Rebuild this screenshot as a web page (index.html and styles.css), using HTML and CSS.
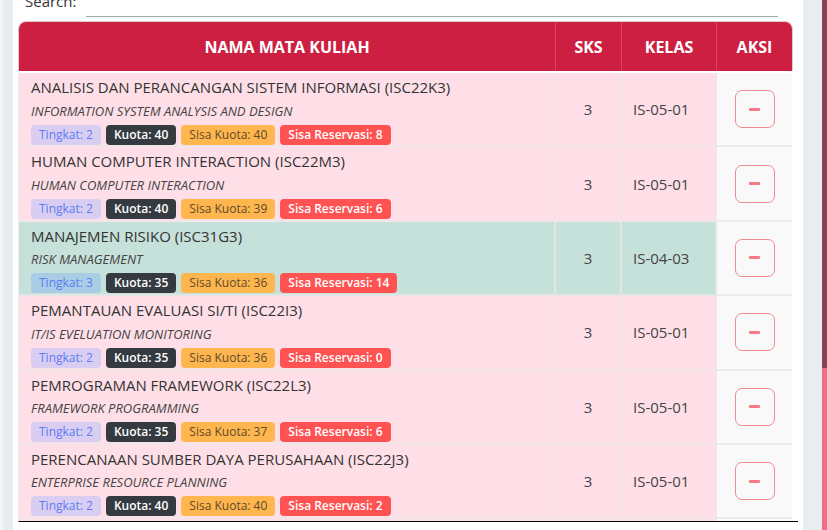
FILE: index.html
```html
<!DOCTYPE html>
<html>
<head>
<meta charset="utf-8">
<link rel="stylesheet" href="styles.css">
</head>
<body>
<div class="page">
  <div class="card">
    <div class="search">
      <label class="search-label">Search:</label>
      <span class="search-input"></span>
    </div>
    <div class="table">
      <div class="thead">
        <div class="th">NAMA MATA KULIAH</div>
        <div class="th">SKS</div>
        <div class="th">KELAS</div>
        <div class="th last">AKSI</div>
      </div>
      <div class="tbody">
        <div class="tr">
          <div class="td name">
            <div class="title">ANALISIS DAN PERANCANGAN SISTEM INFORMASI (ISC22K3)</div>
            <div class="subtitle">INFORMATION SYSTEM ANALYSIS AND DESIGN</div>
            <div class="badges"><span class="badge b-tingkat">Tingkat: 2</span><span class="badge b-kuota">Kuota: 40</span><span class="badge b-sisa">Sisa Kuota: 40</span><span class="badge b-res">Sisa Reservasi: 8</span></div>
          </div>
          <div class="td sks">3</div>
          <div class="td kelas">IS-05-01</div>
          <div class="td aksi"><span class="btn-remove"><span class="minus"></span></span></div>
        </div>
        <div class="tr">
          <div class="td name">
            <div class="title">HUMAN COMPUTER INTERACTION (ISC22M3)</div>
            <div class="subtitle">HUMAN COMPUTER INTERACTION</div>
            <div class="badges"><span class="badge b-tingkat">Tingkat: 2</span><span class="badge b-kuota">Kuota: 40</span><span class="badge b-sisa">Sisa Kuota: 39</span><span class="badge b-res">Sisa Reservasi: 6</span></div>
          </div>
          <div class="td sks">3</div>
          <div class="td kelas">IS-05-01</div>
          <div class="td aksi"><span class="btn-remove"><span class="minus"></span></span></div>
        </div>
        <div class="tr green">
          <div class="td name">
            <div class="title">MANAJEMEN RISIKO (ISC31G3)</div>
            <div class="subtitle">RISK MANAGEMENT</div>
            <div class="badges"><span class="badge b-tingkat">Tingkat: 3</span><span class="badge b-kuota">Kuota: 35</span><span class="badge b-sisa">Sisa Kuota: 36</span><span class="badge b-res">Sisa Reservasi: 14</span></div>
          </div>
          <div class="td sks">3</div>
          <div class="td kelas">IS-04-03</div>
          <div class="td aksi"><span class="btn-remove"><span class="minus"></span></span></div>
        </div>
        <div class="tr">
          <div class="td name">
            <div class="title">PEMANTAUAN EVALUASI SI/TI (ISC22I3)</div>
            <div class="subtitle">IT/IS EVELUATION MONITORING</div>
            <div class="badges"><span class="badge b-tingkat">Tingkat: 2</span><span class="badge b-kuota">Kuota: 35</span><span class="badge b-sisa">Sisa Kuota: 36</span><span class="badge b-res">Sisa Reservasi: 0</span></div>
          </div>
          <div class="td sks">3</div>
          <div class="td kelas">IS-05-01</div>
          <div class="td aksi"><span class="btn-remove"><span class="minus"></span></span></div>
        </div>
        <div class="tr">
          <div class="td name">
            <div class="title">PEMROGRAMAN FRAMEWORK (ISC22L3)</div>
            <div class="subtitle">FRAMEWORK PROGRAMMING</div>
            <div class="badges"><span class="badge b-tingkat">Tingkat: 2</span><span class="badge b-kuota">Kuota: 35</span><span class="badge b-sisa">Sisa Kuota: 37</span><span class="badge b-res">Sisa Reservasi: 6</span></div>
          </div>
          <div class="td sks">3</div>
          <div class="td kelas">IS-05-01</div>
          <div class="td aksi"><span class="btn-remove"><span class="minus"></span></span></div>
        </div>
        <div class="tr">
          <div class="td name">
            <div class="title">PERENCANAAN SUMBER DAYA PERUSAHAAN (ISC22J3)</div>
            <div class="subtitle">ENTERPRISE RESOURCE PLANNING</div>
            <div class="badges"><span class="badge b-tingkat">Tingkat: 2</span><span class="badge b-kuota">Kuota: 40</span><span class="badge b-sisa">Sisa Kuota: 40</span><span class="badge b-res">Sisa Reservasi: 2</span></div>
          </div>
          <div class="td sks">3</div>
          <div class="td kelas">IS-05-01</div>
          <div class="td aksi"><span class="btn-remove"><span class="minus"></span></span></div>
        </div>
        <div class="tr">
          <div class="td name">
            <div class="title">SISTEM ENTERPRISE (ISC32A3)</div>
            <div class="subtitle">ENTERPRISE SYSTEM</div>
            <div class="badges"><span class="badge b-tingkat">Tingkat: 3</span><span class="badge b-kuota">Kuota: 40</span><span class="badge b-sisa">Sisa Kuota: 38</span><span class="badge b-res">Sisa Reservasi: 4</span></div>
          </div>
          <div class="td sks">3</div>
          <div class="td kelas">IS-05-01</div>
          <div class="td aksi"><span class="btn-remove"><span class="minus"></span></span></div>
        </div>
        <div class="tr">
          <div class="td name">
            <div class="title">TATA KELOLA TEKNOLOGI INFORMASI (ISC32B3)</div>
            <div class="subtitle">IT GOVERNANCE</div>
            <div class="badges"><span class="badge b-tingkat">Tingkat: 3</span><span class="badge b-kuota">Kuota: 40</span><span class="badge b-sisa">Sisa Kuota: 40</span><span class="badge b-res">Sisa Reservasi: 5</span></div>
          </div>
          <div class="td sks">3</div>
          <div class="td kelas">IS-05-01</div>
          <div class="td aksi"><span class="btn-remove"><span class="minus"></span></span></div>
        </div>
      </div>
    </div>
  </div>
  <div class="side"></div>
  <div class="pagebar"></div>
</div>
</body>
</html>
```
FILE: styles.css
```css
* { box-sizing: border-box; }
html, body { margin: 0; padding: 0; }
body {
  font-family: "Open Sans", "Liberation Sans", sans-serif;
  background: #e9ecf0;
  overflow: hidden;
  color: #333;
}
.page {
  display: flex;
  height: 530px;
  border-left: 3px solid #f4f5f7;
  padding-left: 10px;
  overflow: hidden;
}
.card {
  width: 790px;
  flex: none;
  background: #fff;
  padding: 0 5px;
}
.side { width: 19px; flex: none; background: #e9ecf1; }
.pagebar {
  width: 5px;
  flex: none;
  background: linear-gradient(#8b4253 0, #8b4253 368px, #ee7088 368px, #ee7088 100%);
}

.search {
  display: flex;
  align-items: stretch;
  height: 31px;
  margin-top: -14px;
  margin-bottom: 4px;
  padding-left: 7px;
}
.search-label {
  font-size: 15px;
  line-height: 31px;
  color: #333;
}
.search-input {
  width: 692px;
  margin-left: 10px;
  border-bottom: 1px solid #aaa;
}

.table { width: 780px; }
.thead {
  display: grid;
  grid-template-columns: 537px 66px 95px 75px;
  width: 775px;
  height: 50px;
  background: #cc1f41;
  border: 1px solid #e2c9ce;
  border-bottom: 0;
  border-radius: 8px 8px 0 0;
  color: #fff;
  font-weight: 700;
  font-size: 16px;
}
.th {
  display: flex;
  align-items: center;
  justify-content: center;
  border-right: 1px solid #d9475f;
}
.th.last { border-right: 0; }

.tbody {
  margin-top: 1px;
  height: 450px;
  border-left: 1px solid #ececec;
  border-bottom: 1px solid #000;
  overflow-y: scroll;
  padding-top: 1px;
}
.tbody::-webkit-scrollbar { width: 6px; }
.tbody::-webkit-scrollbar-track { background: #fff; }
.tbody::-webkit-scrollbar-thumb { background: #6a6a6a; border-radius: 0 0 3px 3px; }

.tr {
  display: grid;
  grid-template-columns: 537px 66px 95px 75px;
  height: 74.4px;
}
.td {
  background: #fedfe7;
  border-right: 2px solid #f1e5e8;
  border-bottom: 2px solid #f1e5e8;
}
.tr.green .td { background: #c6e0da; border-color: #e3e6e5; }
.td.name { padding: 3px 12px 0; }
.title {
  font-size: 15px;
  line-height: 22.5px;
  color: #333;
  white-space: nowrap;
}
.subtitle {
  font-size: 13px;
  line-height: 18px;
  font-style: italic;
  color: #444;
  margin-top: 3px;
  white-space: nowrap;
}
.badges {
  display: flex;
  gap: 5px;
  margin-top: 5px;
}
.badge {
  font-size: 12px;
  line-height: 20px;
  padding: 0 8px;
  border-radius: 4px;
  white-space: nowrap;
}
.b-tingkat { background: #d9cdf2; color: #5b7df3; }
.tr.green .b-tingkat { background: #a9cde4; }
.b-kuota { background: #343a40; color: #fff; font-weight: 600; }
.b-sisa { background: #ffb64e; color: #5e4a2c; }
.b-res { background: #ff5353; color: #fff; font-weight: 600; }

.td.sks {
  display: flex;
  align-items: center;
  justify-content: center;
  font-size: 15px;
  color: #444;
}
.td.kelas {
  display: flex;
  align-items: center;
  padding-left: 11px;
  font-size: 15px;
  color: #444;
}
.td.aksi, .tr.green .td.aksi {
  background: #f9f9f9;
  border-right: 0;
  border-bottom-color: #ececec;
  display: flex;
  align-items: center;
  justify-content: center;
}
.btn-remove {
  width: 40px;
  height: 38px;
  border: 1px solid #f38a90;
  border-radius: 7px;
  display: flex;
  align-items: center;
  justify-content: center;
}
.minus {
  width: 11px;
  height: 3px;
  border-radius: 1px;
  background: #f47a84;
}
```
